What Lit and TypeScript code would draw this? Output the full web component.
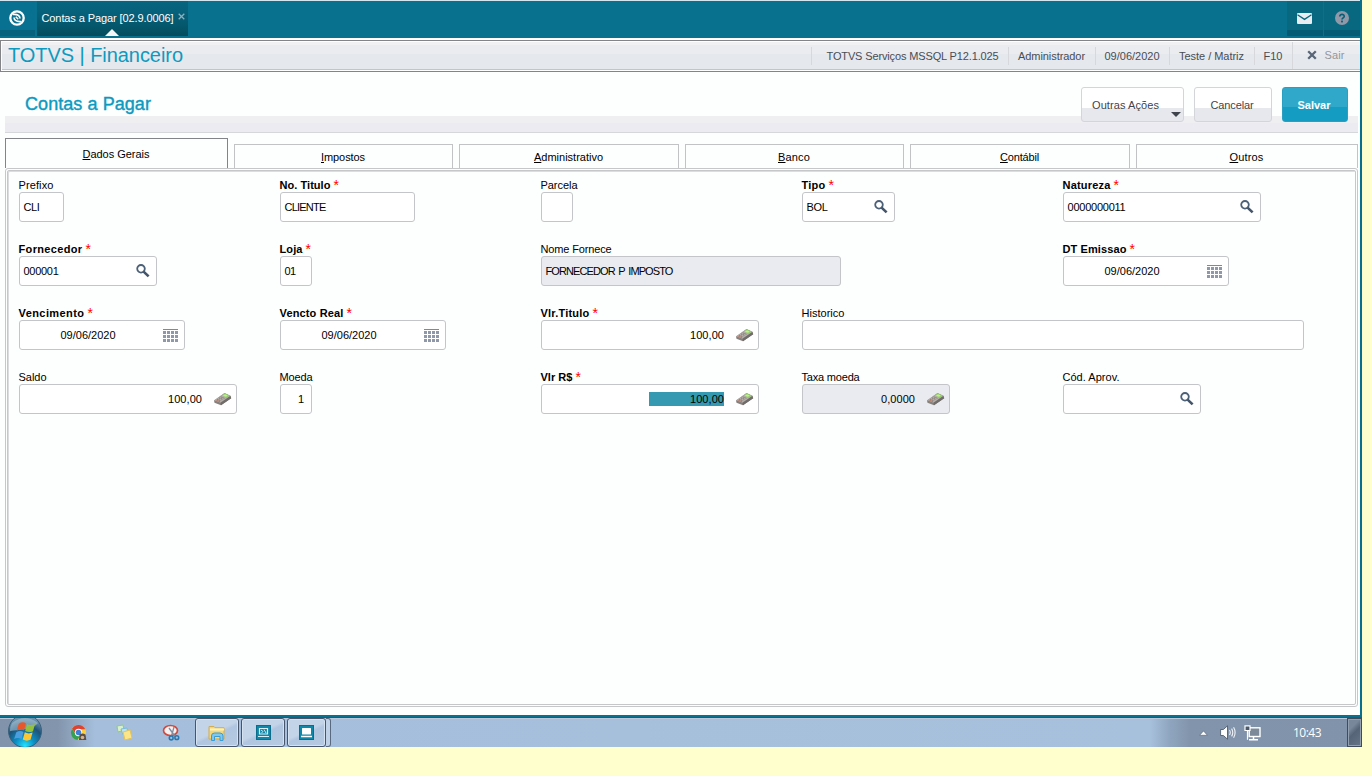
import { LitElement, html, css, svg, nothing } from "lit";
import { customElement, property } from "lit/decorators.js";
import { classMap } from "lit/directives/class-map.js";

type IconKind = "search" | "calendar" | "calculator";

interface Field {
  label: string;
  labelWidth: number;
  required?: boolean;
  row: number;
  col: number;
  width: number;
  value?: string;
  valueWidth?: number;
  align?: "date" | "number" | "code";
  icon?: IconKind;
  readonly?: boolean;
  selected?: boolean;
}

const FIELDS: Field[] = [
  { label: "Prefixo", labelWidth: 35, row: 1, col: 1, width: 45, value: "CLI", valueWidth: 16 },
  { label: "No. Titulo", labelWidth: 51, required: true, row: 1, col: 2, width: 135, value: "CLIENTE", valueWidth: 41 },
  { label: "Parcela", labelWidth: 37, row: 1, col: 3, width: 32 },
  { label: "Tipo", labelWidth: 24, required: true, row: 1, col: 4, width: 93, value: "BOL", valueWidth: 21, icon: "search" },
  { label: "Natureza", labelWidth: 48, required: true, row: 1, col: 5, width: 198, value: "0000000011", valueWidth: 58, icon: "search" },
  { label: "Fornecedor", labelWidth: 64, required: true, row: 2, col: 1, width: 138, value: "000001", valueWidth: 35, icon: "search" },
  { label: "Loja", labelWidth: 23, required: true, row: 2, col: 2, width: 32, value: "01", valueWidth: 11 },
  { label: "Nome Fornece", labelWidth: 71, row: 2, col: 3, width: 300, value: "FORNECEDOR P IMPOSTO", valueWidth: 127, readonly: true },
  { label: "DT Emissao", labelWidth: 64, required: true, row: 2, col: 5, width: 166, value: "09/06/2020", valueWidth: 55, align: "date", icon: "calendar" },
  { label: "Vencimento", labelWidth: 66, required: true, row: 3, col: 1, width: 166, value: "09/06/2020", valueWidth: 55, align: "date", icon: "calendar" },
  { label: "Vencto Real", labelWidth: 64, required: true, row: 3, col: 2, width: 166, value: "09/06/2020", valueWidth: 55, align: "date", icon: "calendar" },
  { label: "Vlr.Titulo", labelWidth: 49, required: true, row: 3, col: 3, width: 218, value: "100,00", valueWidth: 34, align: "number", icon: "calculator" },
  { label: "Historico", labelWidth: 43, row: 3, col: 4, width: 502 },
  { label: "Saldo", labelWidth: 28, row: 4, col: 1, width: 218, value: "100,00", valueWidth: 34, align: "number", icon: "calculator" },
  { label: "Moeda", labelWidth: 33, row: 4, col: 2, width: 32, value: "1", valueWidth: 6, align: "code" },
  { label: "Vlr R$", labelWidth: 32, required: true, row: 4, col: 3, width: 218, value: "100,00", valueWidth: 34, align: "number", icon: "calculator", selected: true },
  { label: "Taxa moeda", labelWidth: 58, row: 4, col: 4, width: 148, value: "0,0000", valueWidth: 34, align: "number", icon: "calculator", readonly: true },
  { label: "Cód. Aprov.", labelWidth: 57, row: 4, col: 5, width: 138, icon: "search" },
];

const TABS = [
  { key: "D", rest: "ados Gerais", text: 67, width: 223, active: true },
  { key: "I", rest: "mpostos", text: 44, width: 219 },
  { key: "A", rest: "dministrativo", text: 69, width: 220 },
  { key: "B", rest: "anco", text: 32, width: 219 },
  { key: "C", rest: "ontábil", text: 39, width: 220 },
  { key: "O", rest: "utros", text: 34, width: 222 },
];

const INFO = [
  { text: "TOTVS Serviços MSSQL P12.1.025", fit: 172, width: 197 },
  { text: "Administrador", fit: 67, width: 87 },
  { text: "09/06/2020", fit: 55, width: 74 },
  { text: "Teste / Matriz", fit: 65, width: 85 },
  { text: "F10", fit: 19, width: 38 },
];

/* Text that spreads or tightens its letters to fill a given width */
@customElement("fit-text")
export class FitText extends LitElement {
  @property({ type: Number }) width = 0;

  static styles = css`
    :host {
      display: inline-block;
      white-space: pre;
    }
  `;

  firstUpdated() {
    const count = (this.textContent || "").length;
    const natural = this.getBoundingClientRect().width;
    if (count && this.width) {
      this.style.letterSpacing = `${(this.width - natural) / count}px`;
    }
  }

  render() {
    return html`<slot></slot>`;
  }
}

@customElement("field-icon")
export class FieldIcon extends LitElement {
  @property() kind: IconKind = "search";

  static styles = css`
    :host,
    svg {
      display: block;
    }
  `;

  render() {
    if (this.kind === "calendar") {
      return html`<svg width="15" height="14" viewBox="0 0 15 14" shape-rendering="crispEdges">
        <path d="M0 .5h15" stroke="#7c899b" />
        ${[2, 6, 10].map((y) =>
          [0, 4, 8, 12].map((x) => svg`<rect x=${x} y=${y} width="3" height="3" fill="#8f98a8" />`)
        )}
      </svg>`;
    }
    if (this.kind === "calculator") {
      return html`<svg width="19" height="14" viewBox="0 0 19 14">
        <path d="M1 8.500 11.500 1l6 2.800.7 2.400L8 13.200 1.500 10.800z" fill="#86817d" />
        <path d="M1.200 8.300 11.400 1.200l6 2.700L7.600 10.800z" fill="#b3ada8" />
        <path d="m8.600 3.600 3.200-2.200 4.900 2.200-2.600 2z" fill="#8fcf62" />
        <path d="m9.800 3.700 2.200-1.400 2.800 1.300-1.800 1.200z" fill="#c3ec94" />
        <path d="m4.200 7.200 4 1.600M6 5.900l4 1.600M7.600 4.800l4.100 1.600" stroke="#746861" stroke-width=".8" stroke-dasharray="1.3 .7" />
        <path d="m3.300 8.200 3.800 1.500" stroke="#c06a52" stroke-width=".8" />
        <path d="m7.600 10.800 9.800-6.900.8 2.300L8 13.200z" fill="#706c69" />
      </svg>`;
    }
    return html`<svg width="14" height="14" viewBox="0 0 14 14">
      <circle cx="5" cy="4.800" r="3.800" fill="none" stroke="#4c6078" stroke-width="1.800" />
      <path d="m7.600 7.600 5 4.800" stroke="#44546b" stroke-width="2.600" />
    </svg>`;
  }
}

@customElement("form-field")
export class FormField extends LitElement {
  @property({ attribute: false }) field!: Field;

  static styles = css`
    :host {
      display: block;
      font: 11px "Liberation Sans", Arial, sans-serif;
      color: #000;
    }
    .label {
      display: flex;
      height: 14px;
      line-height: 14px;
      margin-left: -0.5px;
      white-space: nowrap;
    }
    .label.required {
      font-weight: bold;
    }
    .star {
      margin-left: 3px;
      font-size: 14px;
      line-height: 15px;
      font-weight: normal;
      color: #f00;
    }
    .box {
      display: flex;
      align-items: center;
      box-sizing: border-box;
      height: 30px;
      padding: 0 6px 0 3.5px;
      border: 1px solid #c3c5c8;
      border-radius: 3px;
      background: #fff;
    }
    .box.readonly {
      background: #e9ebf0;
      word-spacing: 1.5px;
    }
    .box.date {
      padding: 1px 6px 0 40.5px;
    }
    .box.calculator {
      padding-right: 4px;
    }
    .box.code {
      padding-right: 7px;
    }
    .value {
      flex: 1;
      line-height: 14px;
    }
    .date .value {
      margin-top: -1px;
    }
    .number .value,
    .code .value {
      display: flex;
      justify-content: flex-end;
    }
    .number field-icon {
      margin-left: 11px;
    }
    .selected fit-text {
      padding-left: 41px;
      background: #3499b1;
    }
  `;

  render() {
    const f = this.field;
    const box = {
      box: true,
      readonly: !!f.readonly,
      selected: !!f.selected,
      [f.align ?? "text"]: true,
      [f.icon ?? "plain"]: true,
    };
    return html`
      <div class=${classMap({ label: true, required: !!f.required })}>
        <fit-text width=${f.labelWidth}>${f.label}</fit-text>
        ${f.required ? html`<span class="star">*</span>` : nothing}
      </div>
      <div class=${classMap(box)} style="width:${f.width}px">
        <div class="value">
          ${f.value
            ? html`<fit-text width=${f.valueWidth! + (f.selected ? 41 : 0)}>${f.value}</fit-text>`
            : nothing}
        </div>
        ${f.icon ? html`<field-icon kind=${f.icon}></field-icon>` : nothing}
      </div>
    `;
  }
}

@customElement("top-bar")
export class TopBar extends LitElement {
  static styles = css`
    :host {
      display: flex;
      box-sizing: border-box;
      height: 38px;
      border-top: 1px solid #d3e6ef;
      background: #08718e;
      font: 11px "Liberation Sans", Arial, sans-serif;
    }
    .cell {
      display: flex;
      align-items: center;
      justify-content: center;
      box-sizing: border-box;
      height: 35px;
      padding: 0 2px 1px 0;
      background: linear-gradient(#087090 0 29px, #06627d 29px);
    }
    .home {
      width: 36px;
      margin-right: 1px;
      padding-right: 1px;
      border-right: 1px solid #2c6575;
    }
    .tab {
      position: relative;
      justify-content: flex-start;
      width: 151px;
      padding-left: 4.500px;
      background: linear-gradient(#076580 0, #065f78 15px, #045264 30px, #034c5d 100%);
      color: #fff;
    }
    .close {
      margin: 0 0 3px 4px;
    }
    .caret {
      position: absolute;
      left: 68px;
      bottom: 0;
      border: 7px solid transparent;
      border-top: 0;
      border-bottom-color: #f4f5f7;
    }
    .mail {
      width: 36px;
      margin-left: auto;
      background: linear-gradient(#07687f 0 29px, #065b74 29px);
    }
    .help {
      width: 36px;
      margin-left: 1px;
      padding-right: 0;
      background: linear-gradient(#07687f 0 29px, #065b74 29px);
    }
  `;

  render() {
    return html`
      <div class="cell home">
        <svg width="16" height="16" viewBox="0 0 16 16">
          <circle cx="8" cy="8" r="6.700" fill="none" stroke="#fff" stroke-width="2.300" />
          <path d="M4 4.500Q10.500 4 11 8.500M12 11.500Q5.500 12 5 7.500" fill="none" stroke="#fff" stroke-width="1.700" />
          <path d="m6.800 6.800 2.400 2.400" stroke="#fff" stroke-width="1.500" />
        </svg>
      </div>
      <div class="cell tab">
        <fit-text width="132">Contas a Pagar [02.9.0006]</fit-text>
        <svg class="close" width="7" height="7" viewBox="0 0 7 7"><path d="m.7.7 5.600 5.600m0-5.600L.7 6.300" stroke="#8cb1bd" stroke-width="1.300" /></svg>
        <span class="caret"></span>
      </div>
      <div class="cell mail">
        <svg width="15" height="11" viewBox="0 0 15 11">
          <rect width="15" height="11" rx="1" fill="#e8edf1" />
          <path d="m.5 1.800 7 4.600 7-4.600" fill="none" stroke="#07687f" stroke-width="1.300" />
        </svg>
      </div>
      <div class="cell help">
        <svg width="14" height="14" viewBox="0 0 14 14">
          <circle cx="7" cy="7" r="7" fill="#9199a8" />
          <path d="M4.800 5.600C4.800 2.600 9.300 2.900 9.200 5.400 9.100 6.900 7 6.800 7 8.600" fill="none" stroke="#075d75" stroke-width="1.700" />
          <rect x="6.100" y="9.600" width="1.800" height="1.800" fill="#075d75" />
        </svg>
      </div>
    `;
  }
}

@customElement("task-bar")
export class TaskBar extends LitElement {
  static styles = css`
    :host {
      display: flex;
      align-items: center;
      box-sizing: border-box;
      height: 30px;
      border-top: 1px solid #3c5064;
      box-shadow: inset 0 1px #b9c8da;
      background: linear-gradient(
        90deg,
        #8093aa 0,
        #8395ac 58px,
        #8fa4bf 72px,
        #a5bedb 95px,
        #a7c0dc 1150px,
        #8fa5bf 1170px,
        #8294ab 1190px,
        #8093aa 100%
      );
    }
    svg {
      display: block;
    }
    .orb {
      margin: 0 27px 0 7px;
    }
    .chrome {
      margin-right: 28px;
    }
    .notes {
      margin-right: 29px;
    }
    .snip {
      margin-right: 15px;
    }
    .task {
      display: flex;
      align-items: center;
      justify-content: center;
      box-sizing: border-box;
      width: 44px;
      height: 29px;
      margin-right: 2px;
      border: 1px solid #47566b;
      border-radius: 3px;
      box-shadow: inset 0 0 0 1px #d4e2f1;
      background: linear-gradient(155deg, #c3d4e8 0 46%, #b0c5df 54%, #b6cae2 100%);
    }
    .last {
      width: 39px;
      margin-right: 0;
    }
    .stack {
      box-sizing: border-box;
      width: 5px;
      height: 29px;
      border: 1px solid #596a80;
      border-left: 0;
      border-radius: 0 3px 3px 0;
      background: #bfd1e6;
    }
    .arrow {
      margin-left: auto;
      margin-right: 12px;
    }
    .sound {
      margin-right: 8px;
    }
    .clock {
      margin: 0 26px 0 32px;
      color: #fff;
      font: 12px "Open Sans", sans-serif;
    }
    .desktop {
      box-sizing: border-box;
      width: 15px;
      height: 29px;
      border: 1px solid #3f4c5d;
      box-shadow: inset 0 0 0 1px #93a0b1;
      background: linear-gradient(135deg, #79879a 30%, #566477 50%, #67758a);
    }
  `;

  render() {
    return html`
      <svg class="orb" width="36" height="29" viewBox="0 -1 36 29">
        <defs>
          <radialGradient id="orb" cx=".5" cy=".95" r=".85">
            <stop offset="0" stop-color="#20e4ff" />
            <stop offset=".35" stop-color="#0b8fc4" />
            <stop offset=".7" stop-color="#1d5379" />
            <stop offset="1" stop-color="#6d93ad" />
          </radialGradient>
        </defs>
        <circle cx="18" cy="12" r="16.500" fill="url(#orb)" stroke="#3a607b" />
        <path d="M5 4Q18-6 31 4q-4 5-12 6T3 12q0-5 2-8z" fill="#b5ccda" opacity=".55" />
        <path d="M11.700 4.700q4-2.500 7.200-.4L17 11.500q-3.300-2-7.300.3z" fill="#e8572a" />
        <path d="M20 4.900q3.200 2 8 .2l-2 7.100q-4 1.800-7.800-.2z" fill="#93c13d" />
        <path d="M9.300 13.200q3.600-2.100 7.200-.3l-2 7.200q-3.400-2-7.400 0z" fill="#4b9ddd" />
        <path d="M17.800 13.300q3.600 2 7.800.3l-2.100 7.200q-4 1.800-7.700-.3z" fill="#fbc735" />
      </svg>
      <svg class="chrome" width="18" height="18" viewBox="0 0 18 18">
        <circle cx="8.500" cy="8.500" r="7.500" fill="#fbd03f" />
        <path d="M2 4.700A7.500 7.500 0 0 1 15.300 5.200L8.500 5.400 5.600 10z" fill="#dd4334" />
        <path d="M2 4.700A7.500 7.500 0 0 0 7.600 16l3-5.200H6z" fill="#34a056" />
        <circle cx="8.500" cy="8.500" r="3.700" fill="#fff" />
        <circle cx="8.500" cy="8.500" r="2.800" fill="#3f7fdc" />
        <path d="M9.500 10.500q3-2 6 0l.8 5.500H9z" fill="#5c4c41" />
        <circle cx="12.500" cy="13.500" r="1.800" fill="#cfb193" />
      </svg>
      <svg class="notes" width="17" height="17" viewBox="0 0 17 17">
        <path d="m1 2 6-1 1 5-6 2z" fill="#d9efcf" stroke="#8bcf79" />
        <path d="m5 5 6-1 1 6-5 1z" fill="#bfe2f0" stroke="#78bddb" />
        <path d="m7 8 7-2 2 8-7 2z" fill="#fbe58a" stroke="#e5c456" />
      </svg>
      <svg class="snip" width="18" height="18" viewBox="0 0 18 18">
        <ellipse cx="8.500" cy="6.500" rx="7" ry="5" fill="#f6f2f2" stroke="#d04a3e" stroke-width="1.700" />
        <path d="m7 4 6.500 9M12 3l-2.500 9" stroke="#7f8ea0" stroke-width="1.300" />
        <circle cx="9.200" cy="14" r="1.900" fill="none" stroke="#2777ae" stroke-width="1.500" />
        <circle cx="14.800" cy="13.700" r="1.900" fill="none" stroke="#2777ae" stroke-width="1.500" />
      </svg>
      <div class="task">
        <svg width="18" height="18" viewBox="0 0 18 18">
          <path d="M1 2.500h5l1 1.200h9V15H1z" fill="#f3d77b" stroke="#d2ad4f" />
          <path d="M2 5.500h14" stroke="#fff3bd" stroke-width="2" />
          <path d="M3.500 16.500V12q0-3 3-3h5.500q3 0 3 3v4.500h-3v-4H6.500v4z" fill="#7ec8ee" stroke="#3c9bd0" />
        </svg>
      </div>
      <div class="task">
        <svg width="15" height="15" viewBox="0 0 15 15">
          <rect x=".5" y=".5" width="14" height="14" fill="#0f87a8" stroke="#0a6d8c" />
          <path d="M3.500 3.500h8v5.500h-8zM2 11.500h11" fill="none" stroke="#d9f0f6" stroke-width="1.200" />
          <path d="m5 5 2 1.500L5.500 8M8 4.500l2 3.500" fill="none" stroke="#d9f0f6" stroke-width=".9" />
        </svg>
      </div>
      <div class="task last">
        <svg width="15" height="15" viewBox="0 0 15 15">
          <rect x=".5" y=".5" width="14" height="14" fill="#0f87a8" stroke="#0a6d8c" />
          <rect x="3" y="3" width="9" height="6.500" rx=".5" fill="#fff" />
          <path d="M2 11.500h11" stroke="#fff" stroke-width="1.500" />
        </svg>
      </div>
      <div class="stack"></div>
      <svg class="arrow" width="9" height="6" viewBox="0 0 9 6"><path d="M.6 5.300h7.800L4.500.9z" fill="#fff" stroke="#5d6c80" stroke-width=".7" /></svg>
      <svg class="sound" width="16" height="15" viewBox="0 0 16 15">
        <path d="M.6 4.500h2.800L7.500.8v13.400l-4.100-3.700H.6z" fill="#fff" stroke="#435063" stroke-width=".8" />
        <path d="M9.500 5q1.500 2.500 0 5M11.600 3.600q2.300 3.900 0 7.800M13.600 2.300q3 5.200 0 10.400" fill="none" stroke="#eef3f8" stroke-width="1.100" />
      </svg>
      <svg width="17" height="16" viewBox="0 0 17 16">
        <rect x="5.200" y="2.800" width="10.800" height="8.700" fill="#7b8999" stroke="#fff" stroke-width="1.400" />
        <path d="M5 14.700h9M9.500 12v2.500" stroke="#fff" stroke-width="1.500" />
        <path d="M1 .8h5v4.700H1zM3.500 5.500v9.300" fill="#4b596b" stroke="#fff" stroke-width="1.200" />
      </svg>
      <fit-text class="clock" width="28">10:43</fit-text>
      <div class="desktop"></div>
    `;
  }
}

@customElement("app-root")
export class AppRoot extends LitElement {
  static styles = css`
    :host {
      display: block;
      height: 776px;
      overflow: hidden;
      background: #ffffce;
      font: 11px "Liberation Sans", Arial, sans-serif;
      color: #000;
    }
    .window {
      display: flex;
      flex-direction: column;
      box-sizing: border-box;
      width: 1362px;
      height: 717px;
      border: solid #08718e;
      border-width: 0 2px 2px 0;
      background: #fdfefe;
    }
    .taskbar {
      width: 1362px;
    }
    .brand {
      display: flex;
      align-items: center;
      box-sizing: border-box;
      height: 32px;
      margin-top: 2px;
      padding: 1px 0 1px 1px;
      border: 1px solid #828487;
      border-right: 0;
    }
    .brand-inner {
      flex: 1;
      display: flex;
      align-items: center;
      box-sizing: border-box;
      height: 28px;
      border-bottom: 1px solid #c3c4c6;
      background: linear-gradient(#f1f0f3 0 3px, #eaecf0 3px 12px, #e5e8ed 12px);
    }
    .product {
      flex: 1;
      padding-left: 6px;
      font-size: 20px;
      color: #0d9abf;
    }
    .info,
    .exit {
      display: flex;
      align-items: center;
      justify-content: center;
      box-sizing: border-box;
      height: 18px;
      padding-right: 1px;
      border-left: 1px solid #d6d8db;
      color: #484d55;
    }
    .info:first-of-type {
      padding-left: 6px;
    }
    .exit {
      width: 68px;
      height: 27px;
      gap: 8px;
      padding: 0 2px 2px 0;
      color: #93979d;
    }
    .heading {
      display: flex;
      box-sizing: border-box;
      height: 61px;
      margin: 0 2px 0 5px;
      padding: 15px 10px 0 20px;
      gap: 10px;
      border-bottom: 1px solid #d6d7db;
      background: linear-gradient(transparent 44px, #efeff2 44px 51px, #ebebf1 51px);
    }
    .title {
      flex: 1;
      padding-top: 7px;
      font-size: 18px;
      line-height: 21px;
      color: #0d9abf;
      -webkit-text-stroke: 0.4px #0d9abf;
    }
    .button {
      display: flex;
      align-items: center;
      justify-content: center;
      position: relative;
      box-sizing: border-box;
      width: 78px;
      height: 35px;
      padding-right: 2px;
      border: 1px solid #d3d5d9;
      border-radius: 3px;
      background: linear-gradient(#fff 0 20px, #e6e8ee 20px);
      color: #3f444c;
    }
    .more {
      width: 103px;
      padding-right: 14px;
    }
    .more::after {
      content: "";
      position: absolute;
      right: 2px;
      bottom: 4px;
      border: 5px solid transparent;
      border-top-color: #3f444c;
      border-bottom: 0;
    }
    .save {
      width: 66px;
      border-color: #2a9fc2;
      background: linear-gradient(#30a8ca 0 19px, #149cc2 19px);
      color: #fff;
      font-weight: bold;
    }
    .tabs {
      display: flex;
      align-items: flex-end;
      gap: 6px;
      height: 30px;
      margin: 5px 0 0 5px;
    }
    .tab {
      display: flex;
      align-items: center;
      justify-content: center;
      box-sizing: border-box;
      height: 24px;
      padding: 1px 1px 0 0;
      border: 1px solid #c2c3c5;
      border-bottom: 0;
    }
    .tab.active {
      height: 30px;
      border-color: #828487;
    }
    .panel {
      flex: 1;
      display: flex;
      margin: 0 2px 8px 5px;
      padding: 1px;
      border: 1px solid #c6c7c9;
      border-radius: 3px;
    }
    .form {
      flex: 1;
      display: grid;
      grid-template-columns: repeat(5, 261px);
      grid-auto-rows: 44px;
      row-gap: 20px;
      padding: 7px 0 0 11px;
      border: 1px solid #c6c7c9;
      border-radius: 2px;
      box-shadow: inset 1px 1px #dcdddf;
    }
  `;

  render() {
    return html`
      <div class="window">
        <top-bar></top-bar>
        <div class="brand">
          <div class="brand-inner">
            <span class="product"><fit-text width="175">TOTVS | Financeiro</fit-text></span>
            ${INFO.map(
              (i) => html`<div class="info" style="width:${i.width}px"><fit-text width=${i.fit}>${i.text}</fit-text></div>`
            )}
            <div class="exit">
              <svg width="10" height="10" viewBox="0 0 10 10"><path d="m1.200 1.200 7.600 7.600m0-7.600L1.200 8.800" stroke="#596576" stroke-width="2.300" /></svg>
              <fit-text width="20">Sair</fit-text>
            </div>
          </div>
        </div>
        <div class="heading">
          <div class="title"><fit-text width="126">Contas a Pagar</fit-text></div>
          <div class="button more"><fit-text width="67">Outras Ações</fit-text></div>
          <div class="button"><fit-text width="43">Cancelar</fit-text></div>
          <div class="button save"><fit-text width="33">Salvar</fit-text></div>
        </div>
        <div class="tabs">
          ${TABS.map(
            (t) => html`<div class=${classMap({ tab: true, active: !!t.active })} style="width:${t.width}px">
              <fit-text width=${t.text}><u>${t.key}</u>${t.rest}</fit-text>
            </div>`
          )}
        </div>
        <div class="panel">
          <div class="form">
            ${FIELDS.map(
              (f) => html`<form-field style="grid-area:${f.row} / ${f.col}" .field=${f}></form-field>`
            )}
          </div>
        </div>
      </div>
      <task-bar class="taskbar"></task-bar>
    `;
  }
}
